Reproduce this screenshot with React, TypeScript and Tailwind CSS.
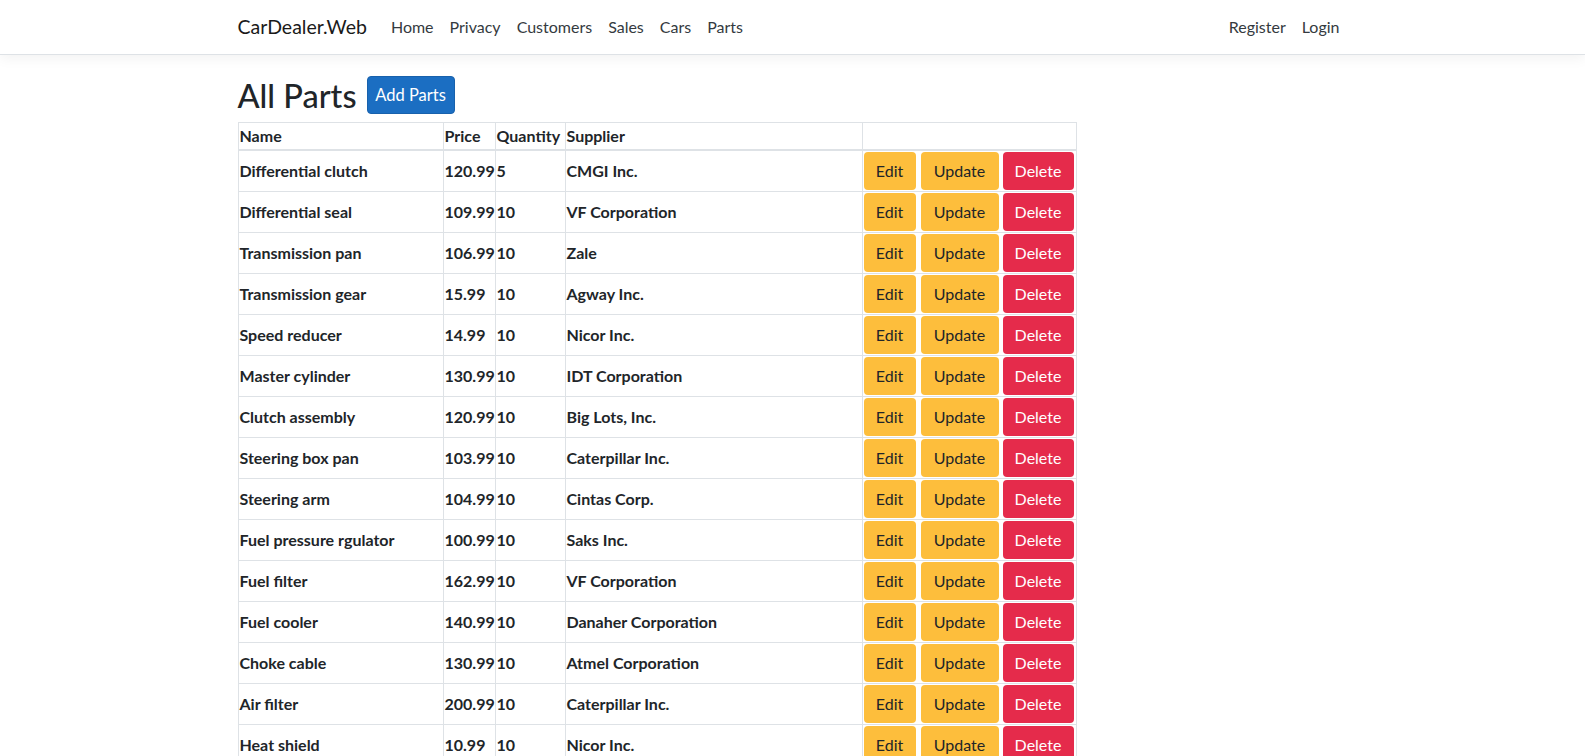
import React from 'react'

type Part = {
  name: string
  price: string
  quantity: number
  supplier: string
}

const parts: Part[] = [
  { name: 'Differential clutch', price: '120.99', quantity: 5, supplier: 'CMGI Inc.' },
  { name: 'Differential seal', price: '109.99', quantity: 10, supplier: 'VF Corporation' },
  { name: 'Transmission pan', price: '106.99', quantity: 10, supplier: 'Zale' },
  { name: 'Transmission gear', price: '15.99', quantity: 10, supplier: 'Agway Inc.' },
  { name: 'Speed reducer', price: '14.99', quantity: 10, supplier: 'Nicor Inc.' },
  { name: 'Master cylinder', price: '130.99', quantity: 10, supplier: 'IDT Corporation' },
  { name: 'Clutch assembly', price: '120.99', quantity: 10, supplier: 'Big Lots, Inc.' },
  { name: 'Steering box pan', price: '103.99', quantity: 10, supplier: 'Caterpillar Inc.' },
  { name: 'Steering arm', price: '104.99', quantity: 10, supplier: 'Cintas Corp.' },
  { name: 'Fuel pressure rgulator', price: '100.99', quantity: 10, supplier: 'Saks Inc.' },
  { name: 'Fuel filter', price: '162.99', quantity: 10, supplier: 'VF Corporation' },
  { name: 'Fuel cooler', price: '140.99', quantity: 10, supplier: 'Danaher Corporation' },
  { name: 'Choke cable', price: '130.99', quantity: 10, supplier: 'Atmel Corporation' },
  { name: 'Air filter', price: '200.99', quantity: 10, supplier: 'Caterpillar Inc.' },
  { name: 'Heat shield', price: '10.99', quantity: 10, supplier: 'Nicor Inc.' },
]

const navLinks = ['Home', 'Privacy', 'Customers', 'Sales', 'Cars', 'Parts']

export default function App() {
  return (
    <div className="h-screen overflow-hidden bg-white text-[#212529] font-['Segoe_UI','Lato',sans-serif]">
      <nav className="h-[55px] bg-white border-b border-[#dee2e6] shadow-[0_4px_12px_rgba(0,0,0,0.05)]">
        <div className="w-[1140px] mx-auto px-[15px] h-full flex items-center">
          <a className="text-[19.5px] leading-[30px] text-[#1a1a1a] mr-4">CarDealer.Web</a>
          <ul className="flex">
            {navLinks.map((link) => (
              <li key={link}>
                <a className="px-2 text-[16px] leading-6 text-[#343a40]">{link}</a>
              </li>
            ))}
          </ul>
          <ul className="flex ml-auto">
            <li>
              <a className="px-2 text-[16px] leading-6 text-[#343a40]">Register</a>
            </li>
            <li>
              <a className="px-2 text-[16px] leading-6 text-[#343a40]">Login</a>
            </li>
          </ul>
        </div>
      </nav>

      <main className="w-[1140px] mx-auto px-[15px] pt-4">
        <div className="flex items-center h-[48px] mb-[3px]">
          <h1 className="text-[32.5px] font-medium leading-[1.2] mr-[10px]">All Parts</h1>
          <button className="h-[38px] w-[88px] rounded-[4px] bg-[#1b6ec2] border border-[#1861ac] text-white text-[16.5px]">
            Add Parts
          </button>
        </div>

        <table className="w-[838px] table-fixed border-collapse border border-[#dee2e6] text-[16px] leading-6">
          <colgroup>
            <col className="w-[205px]" />
            <col className="w-[52px]" />
            <col className="w-[70px]" />
            <col className="w-[297px]" />
            <col className="w-[214px]" />
          </colgroup>
          <thead>
            <tr>
              <th className="p-[1px] text-left font-bold border border-b-2 border-[#dee2e6]">Name</th>
              <th className="p-[1px] text-left font-bold border border-b-2 border-[#dee2e6]">Price</th>
              <th className="p-[1px] text-left font-bold border border-b-2 border-[#dee2e6] whitespace-nowrap">Quantity</th>
              <th className="p-[1px] text-left font-bold border border-b-2 border-[#dee2e6]">Supplier</th>
              <th className="p-[1px] border border-b-2 border-[#dee2e6]"></th>
            </tr>
          </thead>
          <tbody>
            {parts.map((part, i) => (
              <tr key={i}>
                <td className="p-[1px] font-bold border border-[#dee2e6] whitespace-nowrap">{part.name}</td>
                <td className="p-[1px] font-bold border border-[#dee2e6] whitespace-nowrap">{part.price}</td>
                <td className="p-[1px] font-bold border border-[#dee2e6]">{part.quantity}</td>
                <td className="p-[1px] font-bold border border-[#dee2e6] whitespace-nowrap">{part.supplier}</td>
                <td className="p-[1px] border border-[#dee2e6]">
                  <div className="flex">
                    <button className="h-[38px] w-[52px] rounded-[4px] bg-[#fdbe3c] text-[#212529] text-[16px]">
                      Edit
                    </button>
                    <button className="ml-[5px] h-[38px] w-[78px] rounded-[4px] bg-[#fdbe3c] text-[#212529] text-[16px]">
                      Update
                    </button>
                    <button className="ml-[4px] h-[38px] w-[71px] rounded-[4px] bg-[#e52b4b] text-white text-[16px]">
                      Delete
                    </button>
                  </div>
                </td>
              </tr>
            ))}
          </tbody>
        </table>
      </main>
    </div>
  )
}
